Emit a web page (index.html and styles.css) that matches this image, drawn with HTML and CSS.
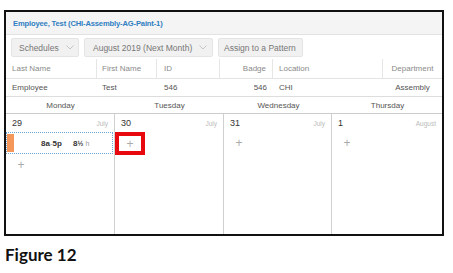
FILE: index.html
```html
<!DOCTYPE html>
<html>
<head>
<meta charset="utf-8">
<link rel="stylesheet" href="styles.css">
</head>
<body>
<div class="frame">
  <div class="titlebar"><span class="title">Employee, Test (CHI-Assembly-AG-Paint-1)</span></div>
  <div class="toolbar">
    <div class="btn w-sched">Schedules <span class="chev"><svg width="8" height="5" viewBox="0 0 8 5"><path d="M0.5 0.5 L4 4 L7.5 0.5" fill="none" stroke="#c4c4c4" stroke-width="1"/></svg></span></div>
    <div class="btn w-month">August 2019 (Next Month) <span class="chev"><svg width="8" height="5" viewBox="0 0 8 5"><path d="M0.5 0.5 L4 4 L7.5 0.5" fill="none" stroke="#c4c4c4" stroke-width="1"/></svg></span></div>
    <div class="btn w-assign">Assign to a Pattern</div>
  </div>
  <div class="info">
    <div class="row head">
      <div class="c c1">Last Name</div>
      <div class="c c2">First Name</div>
      <div class="c c3">ID</div>
      <div class="c c4 r">Badge</div>
      <div class="c c5">Location</div>
      <div class="c c6 ctr">Department</div>
    </div>
    <div class="row data">
      <div class="c c1">Employee</div>
      <div class="c c2">Test</div>
      <div class="c c3">546</div>
      <div class="c c4 r">546</div>
      <div class="c c5">CHI</div>
      <div class="c c6 ctr">Assembly</div>
    </div>
  </div>
  <div class="days">
    <div class="day">Monday</div>
    <div class="day">Tuesday</div>
    <div class="day">Wednesday</div>
    <div class="day">Thursday</div>
  </div>
  <div class="cal">
    <div class="cell">
      <div class="cellhead"><span class="num">29</span><span class="mon">July</span></div>
      <div class="shift"><span class="bar"></span><span class="time">8a<span class="dash">-</span>5p</span><span class="hrs">8<span class="frac">½</span> <span class="h">h</span></span></div>
      <div class="add">+</div>
    </div>
    <div class="cell">
      <div class="cellhead"><span class="num">30</span><span class="mon">July</span></div>
      <div class="add hl">+</div>
    </div>
    <div class="cell">
      <div class="cellhead"><span class="num">31</span><span class="mon">July</span></div>
      <div class="add">+</div>
    </div>
    <div class="cell last">
      <div class="cellhead"><span class="num">1</span><span class="mon">August</span></div>
      <div class="add">+</div>
    </div>
  </div>
</div>
<div class="caption">Figure 12</div>
</body>
</html>
```

FILE: styles.css
```css
* { box-sizing: border-box; }
body {
  margin: 0;
  background: #fff;
  font-family: "Liberation Sans", Arial, sans-serif;
  color: #333;
}
.frame {
  margin: 10px 0 0 4px;
  width: 440px;
  height: 226px;
  border: 2px solid #111;
  display: flex;
  flex-direction: column;
  overflow: hidden;
}
.titlebar {
  height: 23px;
  background: #f4f4f4;
  border-bottom: 1px solid #e2e2e2;
  display: flex;
  align-items: center;
  padding-left: 7px;
}
.title {
  font-size: 7.6px;
  color: #2f7ec2;
  font-weight: bold;
  letter-spacing: -0.15px;
}
.toolbar {
  display: flex;
  gap: 5px;
  padding: 3px 0 0 5px;
  height: 24px;
}
.btn {
  flex: none;
  white-space: nowrap;
  height: 19px;
  background: #f1f1f1;
  border: 1px solid #e4e4e4;
  border-radius: 2px;
  font-size: 8.5px;
  color: #777;
  display: flex;
  align-items: center;
  padding: 0 6px;
  gap: 7px;
}
.w-sched { width: 68px; padding-left: 7px; }
.w-month { width: 129px; padding-left: 8px; }
.w-assign { width: 85px; padding-left: 5px; }
.chev { display: flex; align-items: center; }
.row {
  display: flex;
  font-size: 8px;
}
.row.head { height: 20px; color: #8a8a8a; border-bottom: 1px solid #e4e4e4; }
.row.data { height: 18px; color: #555; border-bottom: 1px solid #ddd; }
.c { display: flex; align-items: center; padding: 0 6px; white-space: nowrap; }
.head .c { border-right: 1px solid #e6e6e6; }
.head .c6 { border-right: none; }
.c1 { width: 91px; }
.c2 { width: 60px; padding-left: 5px; }
.c3 { width: 63px; padding-left: 7px; }
.c4 { width: 53px; }
.c5 { width: 110px; }
.c6 { flex: 1; }
.r { justify-content: flex-end; }
.ctr { justify-content: center; }
.days {
  display: grid;
  grid-template-columns: repeat(4, 1fr);
  height: 17px;
  border-bottom: 1px solid #ccc;
  font-size: 8px;
  color: #555;
}
.day { display: flex; align-items: center; justify-content: center; }
.cal {
  flex: 1;
  display: grid;
  grid-template-columns: 109px 109px 108px 1fr;
}
.cell {
  border-right: 1px solid #d0d0d0;
  display: flex;
  flex-direction: column;
  position: relative;
}
.cell.last { border-right: none; }
.cellhead {
  height: 18px;
  display: flex;
  align-items: center;
  justify-content: space-between;
  padding: 0 6px 0 6px;
}
.num { font-size: 9px; color: #333; }
.mon { font-size: 6.5px; color: #bbb; }
.shift {
  height: 22px;
  margin-right: 1px;
  border: 1px dotted #6fa6d8;
  display: flex;
  align-items: center;
  position: relative;
  font-size: 8px;
  font-weight: bold;
  color: #333;
}
.bar {
  width: 7px;
  height: 18px;
  background: #f4975a;
}
.time { margin-left: 27px; }
.dash { font-weight: normal; color: #999; }
.hrs { margin-left: 11px; }
.frac { font-size: 7px; }
.h { font-weight: normal; color: #999; font-size: 7px; }
.add {
  width: 22px;
  height: 20px;
  display: flex;
  align-items: center;
  justify-content: center;
  font-size: 12px;
  color: #aaa;
  margin-left: 4px;
  margin-top: 1px;
}
.add.hl {
  margin-left: 0;
  margin-top: 0;
  width: 30px;
  height: 23px;
  border: 4px solid #e8090f;
}
.caption {
  margin: 8px 0 0 5px;
  font-family: Lato, "Open Sans", sans-serif;
  font-weight: bold;
  font-size: 17px;
  color: #111;
}
```
